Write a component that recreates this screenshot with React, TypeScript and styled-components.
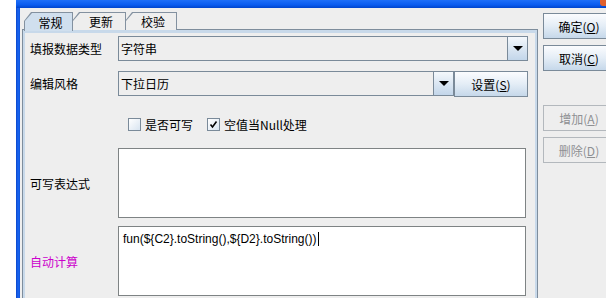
import React from "react";
import styled, { createGlobalStyle } from "styled-components";

const Global = createGlobalStyle`
  html, body { margin: 0; padding: 0; background: #ffffff; overflow: hidden; }
  body { font-family: "Liberation Sans", "Noto Sans CJK SC", sans-serif; font-size: 12px; color: #000; }
`;

const Screen = styled.div`
  width: 606px;
  height: 298px;
  overflow: hidden;
  display: flex;
  background: #ffffff;
`;

const Window = styled.div`
  margin-left: 16px;
  flex: 1;
  display: flex;
  flex-direction: column;
  min-width: 0;
`;

const TitleBar = styled.div`
  height: 8px;
  flex: none;
  background: linear-gradient(#1e6ff8, #0a5cf0 60%, #0044cc);
  position: relative;
`;

const CloseHint = styled.div`
  position: absolute;
  right: 0;
  top: 0;
  width: 6px;
  height: 6px;
  background: #e0602e;
  border-bottom-left-radius: 3px;
`;

const Frame = styled.div`
  flex: 1;
  display: flex;
  min-height: 0;
`;

const SideBorder = styled.div`
  width: 4px;
  flex: none;
  background: linear-gradient(to right, #0a44c8, #1a66f2, #0c52de);
`;

const Client = styled.div`
  flex: 1;
  display: flex;
  background: #eeeeee;
  min-width: 0;
`;

const MainColumn = styled.div`
  width: 516px;
  flex: none;
  margin-left: 2px;
  padding-top: 4px;
  display: flex;
  flex-direction: column;
`;

const TabRow = styled.div`
  display: flex;
  height: 18px;
  padding-left: 2px;
  position: relative;
  z-index: 1;
  margin-bottom: -1px;
`;

const TabOuter = styled.div<{ $selected?: boolean; $w: number }>`
  width: ${(p) => p.$w}px;
  height: ${(p) => (p.$selected ? 19 : 18)}px;
  background: #8391a0;
  clip-path: polygon(0 100%, 0 9px, 7px 0, 100% 0, 100% 100%);
  padding: 1px 1px 0 1px;
  box-sizing: border-box;
  margin-right: -1px;
`;

const TabInner = styled.div<{ $selected?: boolean }>`
  height: 100%;
  background: ${(p) => (p.$selected ? "#d0dfee" : "#eeeeee")};
  clip-path: polygon(0 100%, 0 8px, 7px 0, 100% 0, 100% 100%);
  display: flex;
  align-items: center;
  justify-content: center;
  font-family: "Noto Sans CJK SC", sans-serif;
  font-size: 12px;
  line-height: 1;
  padding-left: 4px;
  padding-top: 1px;
  box-sizing: border-box;
`;

const Panel = styled.div`
  flex: 1;
  border: 1px solid #7e8d9c;
  border-bottom: none;
  box-shadow: inset 0 3px 0 #c8d9ea, inset 2px 0 0 #c8d9ea, inset -2px 0 0 #c8d9ea;
  padding: 6px 9px 0 7px;
  display: flex;
  flex-direction: column;
`;

const Row = styled.div<{ $top?: number; $h: number }>`
  display: flex;
  align-items: center;
  height: ${(p) => p.$h}px;
  margin-top: ${(p) => p.$top ?? 0}px;
  flex: none;
`;

const Label = styled.div<{ $accent?: boolean }>`
  width: 88px;
  flex: none;
  font-family: "Noto Sans CJK SC", sans-serif;
  font-size: 12px;
  color: ${(p) => (p.$accent ? "#cc00cc" : "#000")};
  white-space: nowrap;
`;

const FieldRow = styled.div`
  flex: 1;
  display: flex;
  height: 25px;
`;

const Combo = styled.div`
  flex: 1;
  display: flex;
  border: 1px solid #7a8a99;
  box-sizing: border-box;
  background: #eeeeee;
`;

const ComboText = styled.div`
  flex: 1;
  display: flex;
  align-items: center;
  padding-left: 2px;
  font-family: "Noto Sans CJK SC", sans-serif;
  font-size: 12px;
  border-right: 1px solid #7a8a99;
`;

const ArrowButton = styled.div`
  width: 19px;
  display: flex;
  align-items: center;
  justify-content: center;
  background: linear-gradient(#f4f8fc, #dde8f3 45%, #c3d6ea);
`;

const Arrow = styled.div`
  width: 0;
  height: 0;
  border-left: 5px solid transparent;
  border-right: 5px solid transparent;
  border-top: 5px solid #000;
`;

const PushButton = styled.button<{ $disabled?: boolean; $w?: number }>`
  width: ${(p) => p.$w ?? 72}px;
  height: 26px;
  box-sizing: border-box;
  border: 1px solid ${(p) => (p.$disabled ? "#b3b8bd" : "#7a8a99")};
  background: ${(p) =>
    p.$disabled ? "#eeeeee" : "linear-gradient(#fbfcfe, #e4edf6 50%, #c6d8ea)"};
  color: ${(p) => (p.$disabled ? "#8e9093" : "#000")};
  font-family: "Noto Sans CJK SC", sans-serif;
  font-size: 12px;
  padding: 0;
  display: flex;
  align-items: center;
  justify-content: center;
  flex: none;
  u { text-decoration: underline; }
`;

const CheckRow = styled.div`
  display: flex;
  align-items: center;
  padding-left: 10px;
  padding-top: 5px;
  gap: 14px;
`;

const CheckItem = styled.label`
  display: flex;
  align-items: center;
  gap: 4px;
  font-family: "Noto Sans CJK SC", sans-serif;
  font-size: 12px;
`;

const Box = styled.span`
  width: 13px;
  height: 13px;
  box-sizing: border-box;
  border: 1px solid #7a8a99;
  background: linear-gradient(135deg, #ffffff, #d8e4f0);
  display: flex;
  align-items: center;
  justify-content: center;
`;

const TextArea = styled.div`
  height: 70px;
  width: 408px;
  box-sizing: border-box;
  border: 1px solid #7e8384;
  background: #ffffff;
  padding: 5px 4px;
  font-family: "Liberation Sans", sans-serif;
  font-size: 12px;
  white-space: nowrap;
`;

const Caret = styled.span`
  display: inline-block;
  width: 1px;
  height: 14px;
  background: #000;
  vertical-align: -3px;
  margin-left: 1px;
`;

const SideColumn = styled.div`
  flex: 1;
  display: flex;
  flex-direction: column;
  padding-left: 5px;
  padding-top: 5px;
  gap: 6px;
  min-width: 0;
`;

const Spacer = styled.div`
  height: 22px;
`;

export default function App() {
  return (
    <>
      <Global />
      <Screen>
        <Window>
          <TitleBar>
            <CloseHint />
          </TitleBar>
          <Frame>
            <SideBorder />
            <Client>
              <MainColumn>
                <TabRow>
                  <TabOuter $selected $w={49}>
                    <TabInner $selected>常规</TabInner>
                  </TabOuter>
                  <TabOuter $w={54}>
                    <TabInner>更新</TabInner>
                  </TabOuter>
                  <TabOuter $w={52}>
                    <TabInner>校验</TabInner>
                  </TabOuter>
                </TabRow>
                <Panel>
                  <Row $h={25}>
                    <Label>填报数据类型</Label>
                    <FieldRow>
                      <Combo>
                        <ComboText>字符串</ComboText>
                        <ArrowButton>
                          <Arrow />
                        </ArrowButton>
                      </Combo>
                    </FieldRow>
                  </Row>

                  <Row $h={25} $top={10}>
                    <Label>编辑风格</Label>
                    <FieldRow>
                      <Combo>
                        <ComboText>下拉日历</ComboText>
                        <ArrowButton>
                          <Arrow />
                        </ArrowButton>
                      </Combo>
                      <PushButton $w={74}>
                        设置(<u>S</u>)
                      </PushButton>
                    </FieldRow>
                  </Row>

                  <Row $h={52}>
                    <Label />
                    <CheckRow>
                      <CheckItem>
                        <Box />
                        是否可写
                      </CheckItem>
                      <CheckItem>
                        <Box>
                          <svg width="9" height="9" viewBox="0 0 9 9">
                            <path d="M1.5 4.5 L3.5 7 L7.5 1.5" fill="none" stroke="#000" strokeWidth="1.6" />
                          </svg>
                        </Box>
                        空值当Null处理
                      </CheckItem>
                    </CheckRow>
                  </Row>

                  <Row $h={70}>
                    <Label>可写表达式</Label>
                    <TextArea />
                  </Row>

                  <Row $h={70} $top={8}>
                    <Label $accent>自动计算</Label>
                    <TextArea>
                      fun(${"{"}C2{"}"}.toString(),${"{"}D2{"}"}.toString())
                      <Caret />
                    </TextArea>
                  </Row>
                </Panel>
              </MainColumn>
              <SideColumn>
                <PushButton>
                  确定(<u>O</u>)
                </PushButton>
                <PushButton>
                  取消(<u>C</u>)
                </PushButton>
                <Spacer />
                <PushButton $disabled>
                  增加(<u>A</u>)
                </PushButton>
                <PushButton $disabled>
                  删除(<u>D</u>)
                </PushButton>
              </SideColumn>
            </Client>
          </Frame>
        </Window>
      </Screen>
    </>
  );
}
